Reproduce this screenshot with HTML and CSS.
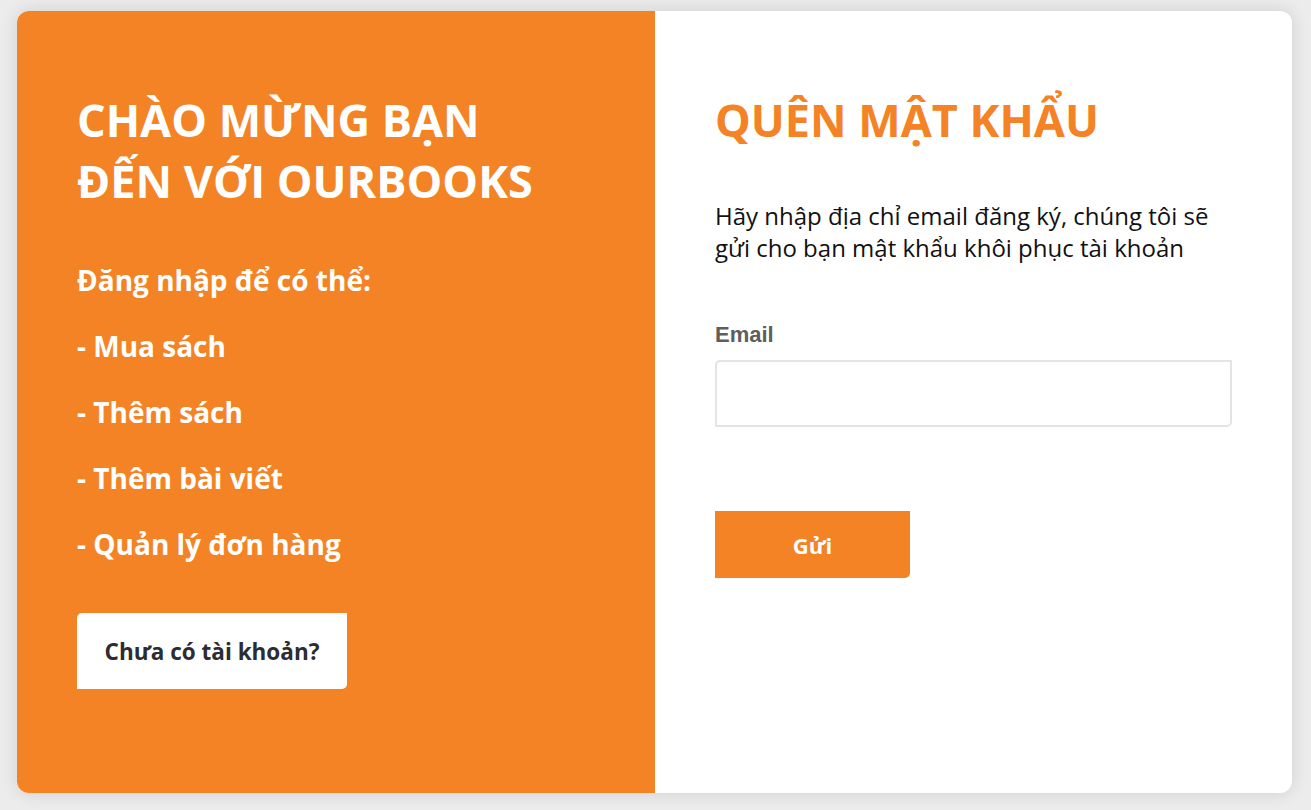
FILE: index.html
```html
<!DOCTYPE html>
<html lang="vi">
<head>
<meta charset="utf-8">
<title>Quên mật khẩu</title>
<link rel="stylesheet" href="styles.css">
</head>
<body>
<div class="card">
  <section class="welcome">
    <h1 class="welcome-title">CHÀO MỪNG BẠN<br>ĐẾN VỚI OURBOOKS</h1>
    <p class="welcome-lead">Đăng nhập để có thể:</p>
    <ul class="welcome-list">
      <li>- Mua sách</li>
      <li>- Thêm sách</li>
      <li>- Thêm bài viết</li>
      <li>- Quản lý đơn hàng</li>
    </ul>
    <a class="btn-register" href="#">Chưa có tài khoản?</a>
  </section>
  <section class="form-panel">
    <h2 class="form-title">QUÊN MẬT KHẨU</h2>
    <p class="form-desc">Hãy nhập địa chỉ email đăng ký, chúng tôi sẽ gửi cho bạn mật khẩu khôi phục tài khoản</p>
    <form class="form">
      <label class="field-label" for="email">Email</label>
      <input class="field-input" id="email" type="email">
      <button class="btn-submit" type="button">Gửi</button>
    </form>
  </section>
</div>
</body>
</html>
```

FILE: styles.css
```css
* { box-sizing: border-box; }
html, body { margin: 0; padding: 0; }
body {
  background: #ececec;
  font-family: "Open Sans", "Liberation Sans", sans-serif;
  height: 810px;
  overflow: hidden;
}
.card {
  margin: 11px 19px 0 17px;
  height: 782px;
  display: flex;
  border-radius: 12px;
  overflow: hidden;
  background: #fff;
  box-shadow: 0 0 18px rgba(0,0,0,0.12);
}
.welcome {
  width: 638px;
  flex: none;
  background: #f48325;
  color: #fff;
  padding: 78px 60px 0 60px;
}
.welcome-title {
  margin: 0;
  font-size: 45px;
  line-height: 61px;
  font-weight: 700;
}
.welcome-lead {
  margin: 51px 0 0;
  font-size: 28px;
  font-weight: 700;
  line-height: 36px;
}
.welcome-list {
  list-style: none;
  margin: 0;
  padding: 0;
}
.welcome-list li {
  margin-top: 30px;
  font-size: 28px;
  font-weight: 700;
  line-height: 36px;
}
.btn-register {
  display: inline-flex;
  align-items: center;
  justify-content: center;
  margin-top: 51px;
  width: 270px;
  height: 76px;
  background: #fff;
  color: #2c2c34;
  font-size: 22.5px;
  font-weight: 700;
  text-decoration: none;
  border-radius: 5px 0 5px 0;
}
.form-panel {
  flex: 1;
  padding: 78px 60px 0 60px;
}
.form-title {
  margin: 0;
  font-size: 45px;
  line-height: 61px;
  font-weight: 700;
  color: #f48325;
}
.form-desc {
  margin: 50px 0 0;
  font-size: 24px;
  line-height: 32px;
  color: #111;
  max-width: 510px;
}
.form {
  display: flex;
  flex-direction: column;
  align-items: flex-start;
  margin-top: 58px;
}
.field-label {
  font-family: "Liberation Sans", Arial, sans-serif;
  font-weight: 700;
  font-size: 22px;
  color: #5e5e5e;
}
.field-input {
  margin-top: 12px;
  width: 517px;
  height: 67px;
  border: 2px solid #e4e4e4;
  border-radius: 5px 0 5px 0;
  outline: none;
}
.btn-submit {
  margin-top: 84px;
  width: 195px;
  height: 67px;
  border: none;
  background: #f48325;
  color: #fff;
  font-family: "Open Sans", sans-serif;
  font-size: 22px;
  font-weight: 700;
  border-radius: 0 0 5px 0;
}
```
